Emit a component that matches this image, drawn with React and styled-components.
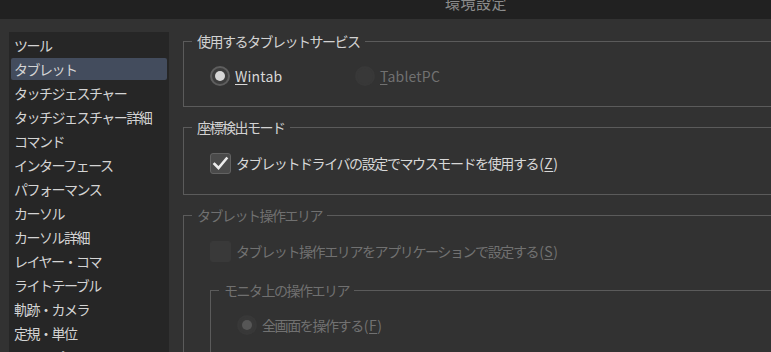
import React from "react";
import styled, { createGlobalStyle } from "styled-components";

const GlobalStyle = createGlobalStyle`
  html, body {
    margin: 0;
    padding: 0;
    background: #323232;
  }
  body {
    font-family: "Noto Sans CJK JP", "Noto Sans", sans-serif;
    font-size: 14px;
    color: #d6d6d6;
  }
`;

const Window = styled.div`
  width: 771px;
  height: 352px;
  overflow: hidden;
  background: #323232;
  display: flex;
  flex-direction: column;
`;

const TitleBar = styled.div`
  height: 19px;
  flex: none;
  background: #212121;
  overflow: hidden;
  padding-left: 445px;
  display: flex;
  align-items: flex-start;
`;

const Title = styled.span`
  font-size: 15px;
  line-height: 15px;
  margin-top: -5px;
  color: #8c8c8c;
  letter-spacing: 0.5px;
`;

const Body = styled.div`
  flex: 1;
  display: flex;
  padding-top: 13px;
  min-height: 0;
`;

const Sidebar = styled.ul`
  list-style: none;
  margin: 0 0 0 9px;
  padding: 2px 2px 0;
  width: 156px;
  flex: none;
  background: #262626;
`;

const NavItem = styled.li`
  height: 22px;
  line-height: 22px;
  margin-bottom: 2px;
  padding-left: 3px;
  border-radius: 2px;
  letter-spacing: -1.5px;
  white-space: nowrap;
  color: #d4d4d4;
  background: ${(p) => (p.$active ? "#434c5d" : "transparent")};
`;

const Content = styled.div`
  flex: 1;
  margin-left: 14px;
  margin-right: -30px;
  display: flex;
  flex-direction: column;
  gap: 11px;
`;

const Group = styled.fieldset`
  margin: ${(p) => (p.$nested ? "17px 0 0" : "0")};
  padding: 0 0 18px 0;
  border: 1px solid #5b5b5b;
  border-radius: 0;
  min-inline-size: 0;
  ${(p) => p.$open && "border-bottom: none; flex: 1;"}
`;

const Legend = styled.legend`
  margin-left: 8px;
  padding: 0 5px;
  height: 18px;
  line-height: 18px;
  letter-spacing: -1.5px;
  color: ${(p) => (p.$disabled ? "#707070" : "#d2d2d2")};
`;

const GroupBody = styled.div`
  padding: 14px 0 0 26px;
`;

const OptionRow = styled.div`
  display: flex;
  align-items: center;
  height: ${(p) => p.$h || 24}px;
`;

const Option = styled.label`
  display: flex;
  align-items: center;
  gap: 5px;
  width: ${(p) => (p.$w ? `${p.$w}px` : "auto")};
  letter-spacing: -1.4px;
  white-space: nowrap;
  color: ${(p) => (p.$disabled ? "#717171" : "#d8d8d8")};

  u {
    text-underline-offset: 2px;
  }
`;

const Latin = styled.span`
  font-size: 14px;
  letter-spacing: 0.2px;
`;

const KeyHint = styled.span`
  letter-spacing: 0.5px;
  margin-left: 1px;
`;

const Key = ({ k }) => (
  <KeyHint>
    (<u>{k}</u>)
  </KeyHint>
);

const Radio = styled.span`
  width: 20px;
  height: 20px;
  box-sizing: border-box;
  border-radius: 50%;
  flex: none;
  display: flex;
  align-items: center;
  justify-content: center;
  background: ${(p) => (p.$disabled ? "#383838" : "#3d3d3d")};
  border: 2px solid ${(p) => (p.$disabled ? "#383838" : "#5e5e5e")};

  &::after {
    content: "";
    width: 10px;
    height: 10px;
    border-radius: 50%;
    display: ${(p) => (p.$checked ? "block" : "none")};
    background: ${(p) => (p.$disabled ? "#565656" : "#d6d6d6")};
  }
`;

const Check = styled.span`
  width: 21px;
  height: 21px;
  box-sizing: border-box;
  flex: none;
  border-radius: 3px;
  display: flex;
  align-items: center;
  justify-content: center;
  background: ${(p) => (p.$disabled ? "#393939" : "#4a4a4a")};
  border: 1px solid ${(p) => (p.$disabled ? "#393939" : "#626262")};
`;

const CheckMark = () => (
  <svg width="17" height="17" viewBox="0 0 17 17">
    <path
      d="M2.5 9 L6.5 13 L14.5 3.5"
      fill="none"
      stroke="#ececec"
      strokeWidth="2.6"
      strokeLinecap="square"
    />
  </svg>
);

const navItems = [
  "ツール",
  "タブレット",
  "タッチジェスチャー",
  "タッチジェスチャー詳細",
  "コマンド",
  "インターフェース",
  "パフォーマンス",
  "カーソル",
  "カーソル詳細",
  "レイヤー・コマ",
  "ライトテーブル",
  "軌跡・カメラ",
  "定規・単位",
  "カラーパレット",
];

export default function App() {
  return (
    <>
      <GlobalStyle />
      <Window>
        <TitleBar>
          <Title>環境設定</Title>
        </TitleBar>
        <Body>
          <Sidebar>
            {navItems.map((item) => (
              <NavItem key={item} $active={item === "タブレット"}>
                {item}
              </NavItem>
            ))}
          </Sidebar>

          <Content>
            <Group>
              <Legend>使用するタブレットサービス</Legend>
              <GroupBody>
                <OptionRow>
                  <Option $w={145}>
                    <Radio $checked />
                    <Latin>
                      <u>W</u>intab
                    </Latin>
                  </Option>
                  <Option $disabled>
                    <Radio $disabled />
                    <Latin>
                      <u>T</u>abletPC
                    </Latin>
                  </Option>
                </OptionRow>
              </GroupBody>
            </Group>

            <Group>
              <Legend>座標検出モード</Legend>
              <GroupBody>
                <OptionRow $h={26}>
                  <Option>
                    <Check>
                      <CheckMark />
                    </Check>
                    <span>
                      タブレットドライバの設定でマウスモードを使用する
                      <Key k="Z" />
                    </span>
                  </Option>
                </OptionRow>
              </GroupBody>
            </Group>

            <Group $open>
              <Legend $disabled>タブレット操作エリア</Legend>
              <GroupBody>
                <OptionRow $h={26}>
                  <Option $disabled>
                    <Check $disabled />
                    <span>
                      タブレット操作エリアをアプリケーションで設定する
                      <Key k="S" />
                    </span>
                  </Option>
                </OptionRow>
                <Group $nested $open>
                  <Legend $disabled>モニタ上の操作エリア</Legend>
                  <GroupBody>
                    <OptionRow>
                      <Option $disabled>
                        <Radio $disabled $checked />
                        <span>
                          全画面を操作する
                          <Key k="F" />
                        </span>
                      </Option>
                    </OptionRow>
                  </GroupBody>
                </Group>
              </GroupBody>
            </Group>
          </Content>
        </Body>
      </Window>
    </>
  );
}
